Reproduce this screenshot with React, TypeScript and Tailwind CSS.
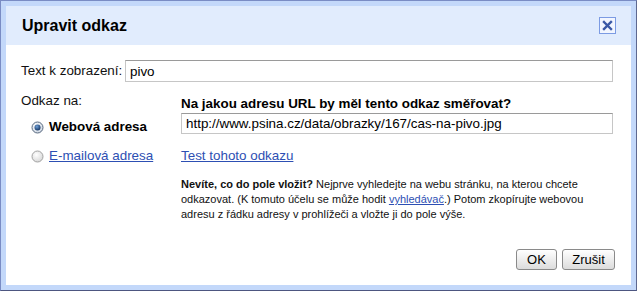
import React from "react";

const Radio = ({ checked }: { checked?: boolean }) => (
  <svg width="13" height="13" viewBox="0 0 13 13" className="shrink-0">
    <defs>
      <radialGradient id={checked ? "rg1" : "rg0"} cx="40%" cy="35%" r="70%">
        <stop offset="0%" stopColor="#ffffff" />
        <stop offset="100%" stopColor={checked ? "#c9d3e0" : "#d6d6d6"} />
      </radialGradient>
      <radialGradient id="dot" cx="40%" cy="35%" r="70%">
        <stop offset="0%" stopColor="#6fa0d8" />
        <stop offset="100%" stopColor="#0f2f5c" />
      </radialGradient>
    </defs>
    <circle
      cx="6.5"
      cy="6.5"
      r="5.5"
      fill={`url(#${checked ? "rg1" : "rg0"})`}
      stroke={checked ? "#5b6b80" : "#a3a3a3"}
      strokeWidth="1"
    />
    {checked && <circle cx="6.5" cy="6.5" r="3" fill="url(#dot)" />}
  </svg>
);

const CloseIcon = () => (
  <div className="w-[17px] h-[17px] border border-[#7c9be3] bg-[#f2f6ff] flex items-center justify-center">
    <svg width="11" height="11" viewBox="0 0 11 11">
      <path d="M2 2 L9 9 M9 2 L2 9" stroke="#3a58a6" strokeWidth="2.4" strokeLinecap="square" />
    </svg>
  </div>
);

export default function App() {
  return (
    <div
      className="w-[637px] h-[291px] border border-[#7a8cc4] border-b-[#4d5680] border-r-[#5d6890] bg-[#c3d8fa] p-[5px]"
      style={{ fontFamily: '"Liberation Sans", Arial, sans-serif' }}
    >
      <div className="h-full bg-white flex flex-col">
        <div className="h-[39px] bg-[#e1ecfd] flex items-center justify-between pl-[16px] pr-[15px]">
          <h1 className="text-[16px] font-bold text-black leading-none">Upravit odkaz</h1>
          <CloseIcon />
        </div>

        <div className="pl-[15px] pr-[18px] text-[13.4px] text-[#111]">
          <div className="mt-[15px] flex items-center">
            <span className="w-[104px]">Text k zobrazení:</span>
            <input
              readOnly
              value="pivo"
              className="flex-1 h-[22px] px-[4px] text-[13.4px] text-black border border-[#c6c6c6] border-t-[#9a9a9a] bg-white outline-none"
            />
          </div>

          <div className="mt-[11px] flex">
            <div className="w-[160px]">
              <div className="h-[16px] leading-[16px]">Odkaz na:</div>
              <label className="mt-[8px] h-[20px] flex items-center gap-[5px] pl-[10px]">
                <Radio checked />
                <span className="font-bold text-black">Webová adresa</span>
              </label>
              <label className="mt-[9px] h-[20px] flex items-center gap-[5px] pl-[10px]">
                <Radio />
                <span className="text-[#2d4fb3] underline">E-mailová adresa</span>
              </label>
            </div>

            <div className="flex-1 pt-[3px]">
              <div className="h-[16px] leading-[16px] font-bold text-black">
                Na jakou adresu URL by měl tento odkaz směřovat?
              </div>
              <input
                readOnly
                value="http://www.psina.cz/data/obrazky/167/cas-na-pivo.jpg"
                className="mt-[1px] w-full h-[21px] px-[4px] text-[13.4px] text-black border border-[#c6c6c6] border-t-[#9a9a9a] bg-white outline-none"
              />
              <div className="mt-[14px] h-[16px] leading-[16px]">
                <span className="text-[#2d4fb3] underline">Test tohoto odkazu</span>
              </div>
              <p className="mt-[13px] w-[420px] text-[11px] leading-[15px] text-[#111]">
                <span className="font-bold">Nevíte, co do pole vložit?</span>
                <span> Nejprve vyhledejte na webu stránku, na kterou chcete odkazovat. (K tomuto účelu se může hodit </span>
                <span className="text-[#2d4fb3] underline">vyhledávač</span>
                <span>.) Potom zkopírujte webovou adresu z řádku adresy v prohlížeči a vložte ji do pole výše.</span>
              </p>
            </div>
          </div>
        </div>

        <div className="mt-auto pb-[15px] pr-[16px] flex justify-end gap-[5px]">
          <button className="w-[41px] h-[21px] text-[13px] text-black border border-[#8a8a8a] rounded-[3px] bg-gradient-to-b from-white to-[#dcdcdc]">
            OK
          </button>
          <button className="w-[53px] h-[21px] text-[13px] text-black border border-[#8a8a8a] rounded-[3px] bg-gradient-to-b from-white to-[#dcdcdc]">
            Zrušit
          </button>
        </div>
      </div>
    </div>
  );
}
